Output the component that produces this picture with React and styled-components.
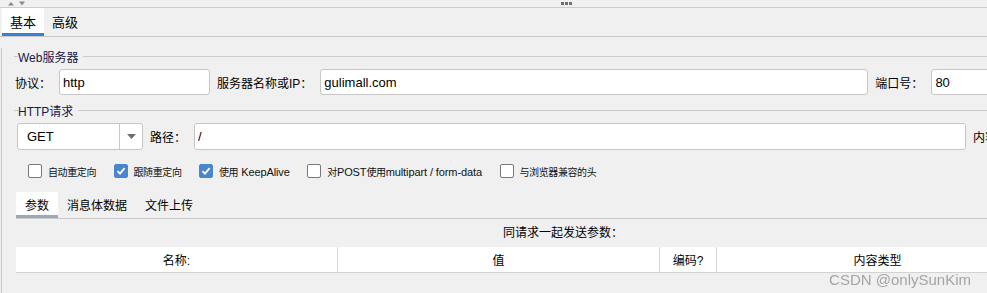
import styled, { createGlobalStyle } from "styled-components";

const GlobalStyle = createGlobalStyle`
  html, body {
    margin: 0;
    padding: 0;
    background: #f0f0f0;
    overflow: hidden;
  }
  body {
    font-family: "Liberation Sans", "Noto Sans CJK SC", sans-serif;
    color: #000;
  }
  * { box-sizing: border-box; }
`;

const columns = ["名称:", "值", "编码?", "内容类型", "包含等于?"];

function CheckBox({ checked }) {
  return (
    <Box $checked={checked}>
      {checked && (
        <svg width="10" height="10" viewBox="0 0 10 10">
          <path d="M1.5 5.2 L4 7.6 L8.6 2.2" stroke="#fff" strokeWidth="1.8" fill="none" />
        </svg>
      )}
    </Box>
  );
}

export default function App() {
  const checkboxes = [
    { label: <>自动重定向</>, checked: false },
    { label: <>跟随重定向</>, checked: true },
    { label: <>使用<Latin> KeepAlive</Latin></>, checked: true },
    { label: <>对<Latin>POST</Latin>使用<Latin>multipart / form-data</Latin></>, checked: false },
    { label: <>与浏览器兼容的头</>, checked: false },
  ];

  return (
    <Root>
      <GlobalStyle />
      <TopStrip>
        <svg width="24" height="5" viewBox="0 0 24 5">
          <path d="M1 4.5 L4 1 L7 4.5 Z" fill="#8a8a8a" />
          <path d="M12 0.5 L18 0.5 L15 4.5 Z" fill="#8a8a8a" />
        </svg>
        <Grip>
          <span /><span /><span />
        </Grip>
        <div />
      </TopStrip>

      <TabBar>
        <Tab $active>基本</Tab>
        <Tab>高级</Tab>
      </TabBar>

      <Panel>
        <Legend>
          <Dash />
          <LegendText>Web服务器</LegendText>
          <Rule />
        </Legend>
        <Row>
          <Label>协议：</Label>
          <Field $w={151} defaultValue="http" />
          <Label $next>服务器名称或IP：</Label>
          <Field $w={548} defaultValue="gulimall.com" />
          <Label $next>端口号：</Label>
          <Field $w={120} defaultValue="80" />
        </Row>

        <Legend $gap={7}>
          <Dash />
          <LegendText>HTTP请求</LegendText>
          <Rule />
        </Legend>
        <Row $h={27} $pad={15}>
          <Select>
            <SelectText>GET</SelectText>
            <SelectArrow>
              <svg width="9" height="5" viewBox="0 0 9 5">
                <path d="M0 0 L9 0 L4.5 5 Z" fill="#6e6e6e" />
              </svg>
            </SelectArrow>
          </Select>
          <Label $next>路径：</Label>
          <Field $w={772} defaultValue="/" />
          <Label $next>内容编码：</Label>
          <Field $w={80} defaultValue="" />
        </Row>

        <Checks>
          {checkboxes.map((c, i) => (
            <CheckItem key={i}>
              <CheckBox checked={c.checked} />
              <CheckLabel>{c.label}</CheckLabel>
            </CheckItem>
          ))}
        </Checks>

        <SubTabBar>
          <SubTab $active>参数</SubTab>
          <SubTab>消息体数据</SubTab>
          <SubTab>文件上传</SubTab>
        </SubTabBar>

        <TableArea>
          <Caption>同请求一起发送参数：</Caption>
          <HeaderRow>
            {columns.map((c) => (
              <HeaderCell key={c}>{c}</HeaderCell>
            ))}
          </HeaderRow>
        </TableArea>
      </Panel>

      <Watermark>CSDN @onlySunKim</Watermark>
    </Root>
  );
}

const Root = styled.div`
  width: 1126px;
  height: 100vh;
  background: #f0f0f0;
`

const TopStrip = styled.div`
  height: 8px;
  border-bottom: 1px solid #cdcdcd;
  display: grid;
  grid-template-columns: 1fr auto 1fr;
  align-items: start;
  padding-left: 7px;
  padding-top: 1px;
`

const Grip = styled.div`
  display: flex;
  gap: 1px;
  padding-top: 1px;

  span{
    width: 3px;
    height: 3px;
    background: #6f6f6f;
  }
`

const TabBar = styled.div`
  height: 29px;
  display: flex;
  padding-left: 2px;
  border-bottom: 1px solid #c9c9c9;
`

const Tab = styled.div`
  height: 28px;
  padding: 1px 8px 0;
  display: flex;
  align-items: center;
  font-size: 13px;
  background: ${(p) => (p.$active ? "#ffffff" : "transparent")};
  border-bottom: 3px solid ${(p) => (p.$active ? "#3b7fd1" : "transparent")};
`

const Panel = styled.div`
  margin-left: 1px;
  border-left: 1px solid #c9c9c9;
  height: calc(100vh - 37px);
`

const Legend = styled.div`
  display: flex;
  align-items: center;
  height: 16px;
  margin-top: ${(p) => p.$gap ?? 11}px;
  padding-left: 12px;
`

const Dash = styled.div`
  width: 4px;
  height: 1px;
  background: #c8c8c8;
`

const LegendText = styled.span`
  font-size: 12px;
  color: #18184a;
  padding: 0 5px 0 0;
`

const Rule = styled.div`
  flex: 1;
  height: 1px;
  background: #cbcbcb;
`

const Row = styled.div`
  display: flex;
  align-items: center;
  height: ${(p) => p.$h ?? 26}px;
  margin-top: 5px;
  padding-left: ${(p) => p.$pad ?? 13}px;
`

const Label = styled.span`
  font-size: 12px;
  white-space: nowrap;
  margin-left: ${(p) => (p.$next ? 7 : 0)}px;
  margin-right: 8px;
`

const Field = styled.input`
  width: ${(p) => p.$w}px;
  flex-shrink: 0;
  height: 100%;
  border: 1px solid #c6c6c6;
  border-radius: 3px;
  background: #ffffff;
  padding: 0 3px;
  font-family: "Liberation Sans", sans-serif;
  font-size: 13px;
  color: #000;

  :focus{
    outline: none;
  }
`

const Select = styled.div`
  width: 126px;
  flex-shrink: 0;
  height: 100%;
  display: flex;
  border: 1px solid #c6c6c6;
  border-radius: 3px;
  background: #ffffff;
`

const SelectText = styled.div`
  flex: 1;
  display: flex;
  align-items: center;
  padding-left: 9px;
  font-size: 13px;
`

const SelectArrow = styled.div`
  width: 23px;
  border-left: 1px solid #c8c8c8;
  display: flex;
  align-items: center;
  justify-content: center;
`

const Checks = styled.div`
  display: flex;
  align-items: center;
  gap: 17.5px;
  height: 14px;
  margin-top: 14px;
  padding-left: 26px;
`

const CheckItem = styled.div`
  display: flex;
  align-items: center;
  gap: 6px;
`

const Box = styled.div`
  width: 14px;
  height: 14px;
  border-radius: 2px;
  display: flex;
  align-items: center;
  justify-content: center;
  background: ${(p) => (p.$checked ? "#4a86cb" : "#ffffff")};
  border: 1px solid ${(p) => (p.$checked ? "#4a86cb" : "#777777")};
`

const CheckLabel = styled.span`
  font-size: 10px;
  letter-spacing: -0.4px;
  white-space: nowrap;
  color: #111;
`

const Latin = styled.span`
  font-size: 11px;
  letter-spacing: -0.1px;
`

const SubTabBar = styled.div`
  display: flex;
  height: 27px;
  margin: 14px 0 0 14px;
  border-bottom: 1px solid #cacaca;
`

const SubTab = styled.div`
  height: 26px;
  padding: 1px 9px 0;
  display: flex;
  align-items: center;
  font-size: 12px;
  background: ${(p) => (p.$active ? "#ffffff" : "transparent")};
  border-bottom: 3px solid ${(p) => (p.$active ? "#9ba7bb" : "transparent")};
`

const TableArea = styled.div`
  width: 1094px;
  margin-left: 14px;
`

const Caption = styled.div`
  margin-top: 6px;
  height: 16px;
  line-height: 16px;
  text-align: center;
  font-size: 12px;
`

const HeaderRow = styled.div`
  margin-top: 6px;
  display: grid;
  grid-template-columns: 321px 322px 57px 322px 1fr;
  height: 26px;
  background: #ffffff;
  border-bottom: 1px solid #d2d2d2;
`

const HeaderCell = styled.div`
  display: flex;
  align-items: center;
  justify-content: center;
  font-size: 12px;
  border-left: 1px solid #d8d8d8;

  &:first-child{
    border-left: none;
  }
`

const Watermark = styled.div`
  position: fixed;
  right: 16px;
  bottom: 5px;
  font-family: "Liberation Sans", sans-serif;
  font-size: 15px;
  color: rgba(150, 150, 150, 0.85);
  pointer-events: none;
`
